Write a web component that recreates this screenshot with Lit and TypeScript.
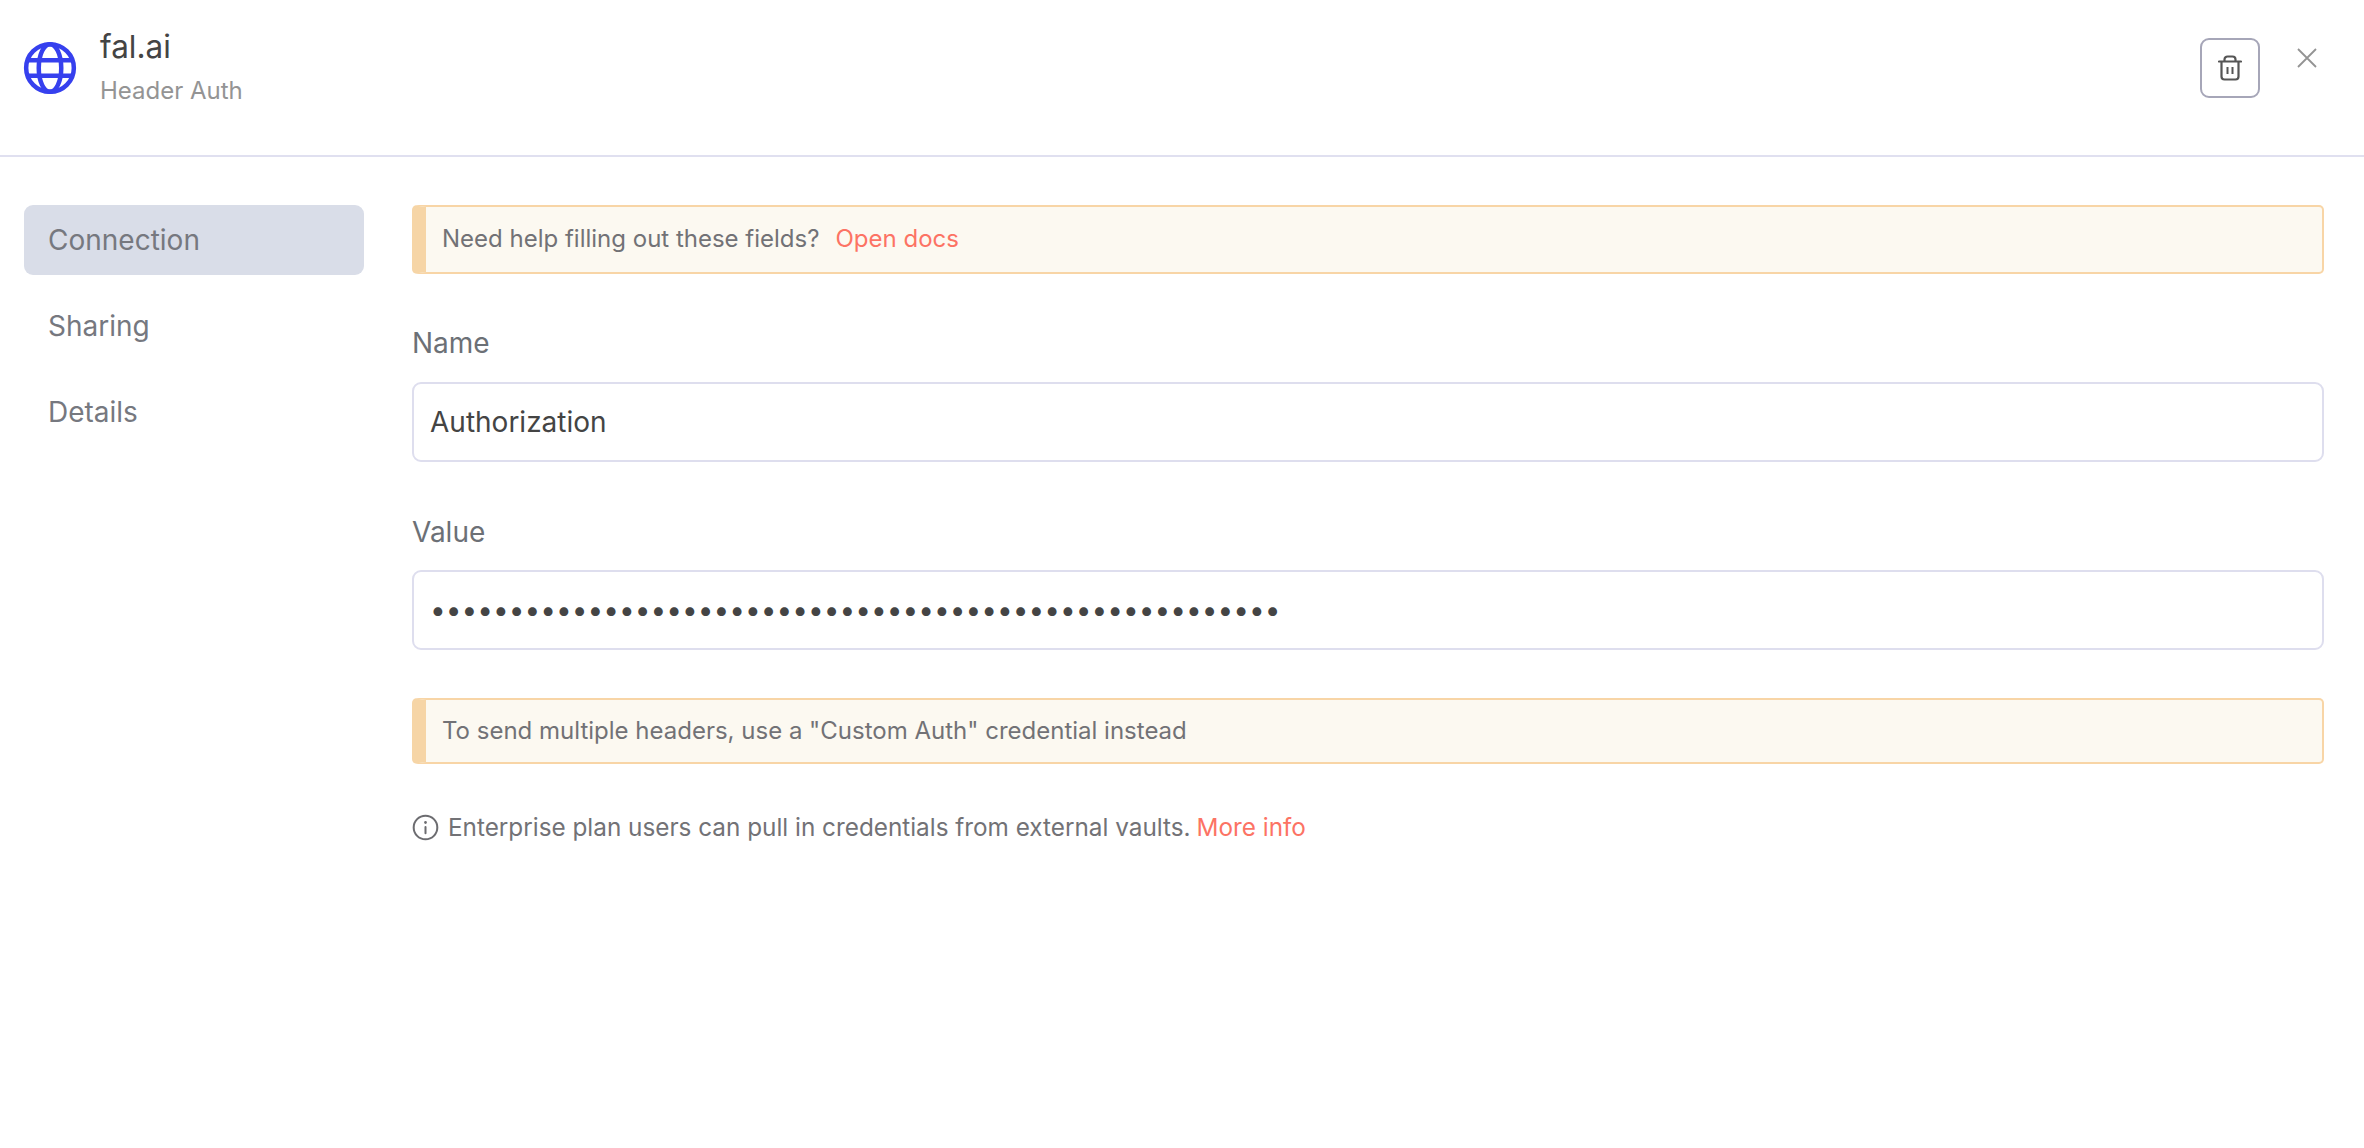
import { LitElement, html, css } from "lit";
import { customElement } from "lit/decorators.js";

@customElement("app-root")
export class AppRoot extends LitElement {
  static styles = css`
    :host {
      display: block;
      width: 100%;
      min-height: 1148px;
      background: #fff;
      font-family: Inter, "Liberation Sans", sans-serif;
      color: #6c7076;
    }
    * { box-sizing: border-box; }
    .header {
      height: 157px;
      border-bottom: 2px solid #e0e0f0;
      display: flex;
      align-items: flex-start;
      padding: 0 24px;
    }
    .globe { width: 54px; height: 54px; margin-top: 41px; flex: none; display: block; margin-left: -1px; }
    .titles { margin-left: 23px; margin-top: 27px; flex: 1; }
    .title { font-size: 31.5px; line-height: 40px; color: #444; }
    .sub { font-size: 24px; line-height: 30px; margin-top: 9px; color: #949494; }
    .del {
      width: 60px; height: 60px; margin-top: 38px;
      border: 2px solid #a6a6b8; border-radius: 9px; background: #fff;
      display: flex; align-items: center; justify-content: center; padding: 0;
    }
    .close { width: 24px; height: 24px; margin: 46px 21px 0 35px; display: block; }
    .body { display: flex; padding: 48px 40px 0 24px; }
    .side { width: 340px; flex: none; display: flex; flex-direction: column; gap: 16px; }
    .tab {
      height: 70px; padding: 0 24px; display: flex; align-items: center;
      font-size: 28px; border-radius: 9px; color: #76787f;
    }
    .tab.active { background: #d9dde8; }
    .main { margin-left: 48px; flex: 1; min-width: 0; }
    .callout {
      border: 2px solid #f8d5a6; border-left: 14px solid #f6d5a6; border-radius: 5px;
      background: #fcf9f1; display: flex; align-items: center;
      padding: 0 16px; font-size: 24px; color: #727276;
    }
    .callout.a { height: 69px; padding-bottom: 3px; }
    .callout.b { height: 66px; margin-top: 48px; padding-bottom: 2px; }
    .link { color: #fc7364; }
    .callout .link { margin-left: 16px; }
    label { display: block; font-size: 28px; line-height: 36px; color: #6c7076; }
    .field { margin-top: 51px; }
    .field label { margin-bottom: 21px; }
    .field.second { margin-top: 52px; }
    .field.second label { margin-bottom: 20px; }
    .input {
      height: 80px; border: 2px solid #dedeee; border-radius: 9px; background: #fff;
      display: flex; align-items: center; padding: 0 16px;
      font-size: 28px; color: #444;
    }
    .info { display: flex; align-items: center; margin-top: 48px; font-size: 24.3px; color: #727276; }
    .info svg { width: 27px; height: 27px; margin-right: 9px; flex: none; }
    .info .link { margin-left: 6px; }
  `;

  render() {
    return html`
      <div class="header">
        <svg class="globe" viewBox="0 0 24 24" fill="none" stroke="#3640ee" stroke-width="2">
          <circle cx="12" cy="12" r="10.6"></circle>
          <ellipse cx="12" cy="12" rx="5" ry="10.6"></ellipse>
          <path d="M2 8.6h20M2 15.4h20"></path>
        </svg>
        <div class="titles">
          <div class="title">fal.ai</div>
          <div class="sub">Header Auth</div>
        </div>
        <button class="del" aria-label="Delete">
          <svg width="24" height="26" viewBox="0 0 24 26" fill="none" stroke="#555" stroke-width="2.2" stroke-linecap="round" stroke-linejoin="round">
            <path d="M1 6.500h22M6.500 6.500V4.500A3 3 0 0 1 9.500 1.500h5a3 3 0 0 1 3 3V6.500M3.500 6.500V21.500a3 3 0 0 0 3 3h11a3 3 0 0 0 3-3V6.500"></path>
            <path d="M9.500 12v7M14.500 12v7" stroke-width="2" stroke-linecap="butt"></path>
          </svg>
        </button>
        <svg class="close" viewBox="0 0 24 24" fill="none" stroke="#939393" stroke-width="1.800" aria-label="Close">
          <path d="M3 3l18 18M21 3L3 21"></path>
        </svg>
      </div>
      <div class="body">
        <div class="side">
          <div class="tab active">Connection</div>
          <div class="tab">Sharing</div>
          <div class="tab">Details</div>
        </div>
        <div class="main">
          <div class="callout a">Need help filling out these fields?<span class="link">Open docs</span></div>
          <div class="field">
            <label>Name</label>
            <div class="input">Authorization</div>
          </div>
          <div class="field second">
            <label>Value</label>
            <div class="input">${"•".repeat(54)}</div>
          </div>
          <div class="callout b">To send multiple headers, use a "Custom Auth" credential instead</div>
          <div class="info">
            <svg viewBox="0 0 24 24" fill="none" stroke="#6c6c70" stroke-width="1.800" stroke-linecap="round">
              <circle cx="12" cy="12" r="10.500"></circle>
              <path d="M12 11.500v5.500"></path>
              <path d="M12 7.400v.2" stroke-width="2.400"></path>
            </svg>
            Enterprise plan users can pull in credentials from external vaults.<span class="link">More info</span>
          </div>
        </div>
      </div>
    `;
  }
}
